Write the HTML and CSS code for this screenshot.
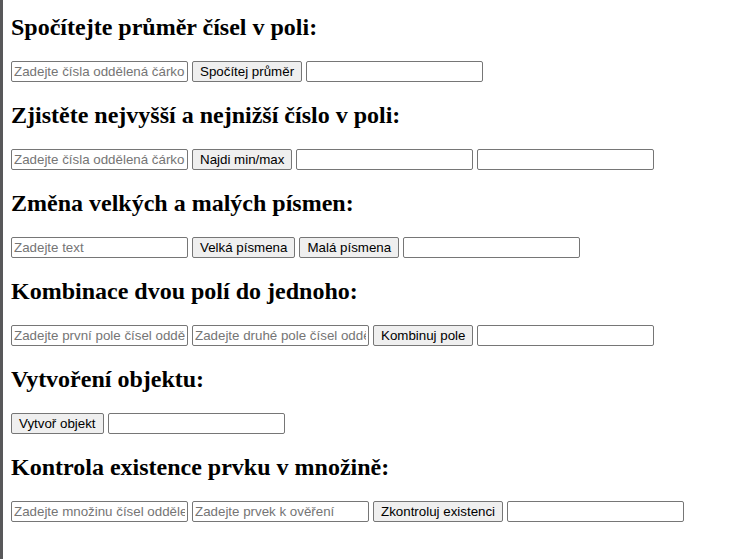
FILE: index.html
```html
<!DOCTYPE html>
<html lang="cs">
<head>
<meta charset="utf-8">
<title>Úlohy s poli</title>
<link rel="stylesheet" href="styles.css">
</head>
<body>
<h2 class="title first">Spočítejte průměr čísel v poli:</h2>
<div class="row">
<input class="field" type="text" placeholder="Zadejte čísla oddělená čárkou">
<button class="btn" type="button">Spočítej průměr</button>
<input class="field" type="text">
</div>
<h2 class="title">Zjistěte nejvyšší a nejnižší číslo v poli:</h2>
<div class="row">
<input class="field" type="text" placeholder="Zadejte čísla oddělená čárkou">
<button class="btn" type="button">Najdi min/max</button>
<input class="field" type="text">
<input class="field" type="text">
</div>
<h2 class="title">Změna velkých a malých písmen:</h2>
<div class="row">
<input class="field" type="text" placeholder="Zadejte text">
<button class="btn" type="button">Velká písmena</button>
<button class="btn" type="button">Malá písmena</button>
<input class="field" type="text">
</div>
<h2 class="title">Kombinace dvou polí do jednoho:</h2>
<div class="row">
<input class="field" type="text" placeholder="Zadejte první pole čísel oddělených čárkou">
<input class="field" type="text" placeholder="Zadejte druhé pole čísel oddělených čárkou">
<button class="btn" type="button">Kombinuj pole</button>
<input class="field" type="text">
</div>
<h2 class="title">Vytvoření objektu:</h2>
<div class="row">
<button class="btn" type="button">Vytvoř objekt</button>
<input class="field" type="text">
</div>
<h2 class="title">Kontrola existence prvku v množině:</h2>
<div class="row">
<input class="field" type="text" placeholder="Zadejte množinu čísel oddělených čárkou">
<input class="field" type="text" placeholder="Zadejte prvek k ověření">
<button class="btn" type="button">Zkontroluj existenci</button>
<input class="field" type="text">
</div>
</body>
</html>
```

FILE: styles.css
```css
html {
  border-left: 3px solid #58585a;
  min-height: 100%;
  box-sizing: border-box;
}
body {
  margin: 0 8px 8px 8px;
  font-family: "Liberation Serif", "Times New Roman", serif;
  font-size: 16px;
  color: #000;
  background: #fff;
}
.title {
  font-size: 24px;
  font-weight: bold;
  margin: 20px 0;
}
.title.first {
  margin-top: 14px;
}
.row {
  margin: 0;
}
.field {
  box-sizing: border-box;
  width: 177px;
  height: 21px;
  padding: 1px 2px;
  border: 1px solid #767676;
  border-radius: 2px;
  font-family: "Liberation Sans", Arial, sans-serif;
  font-size: 13.333px;
  color: #000;
  background: #fff;
  vertical-align: baseline;
}
.field::placeholder {
  color: #757575;
}
.btn {
  box-sizing: border-box;
  height: 21px;
  padding: 1px 7px;
  border: 1px solid #767676;
  border-radius: 2px;
  background: #efefef;
  font-family: "Liberation Sans", Arial, sans-serif;
  font-size: 13.333px;
  color: #000;
}
```
